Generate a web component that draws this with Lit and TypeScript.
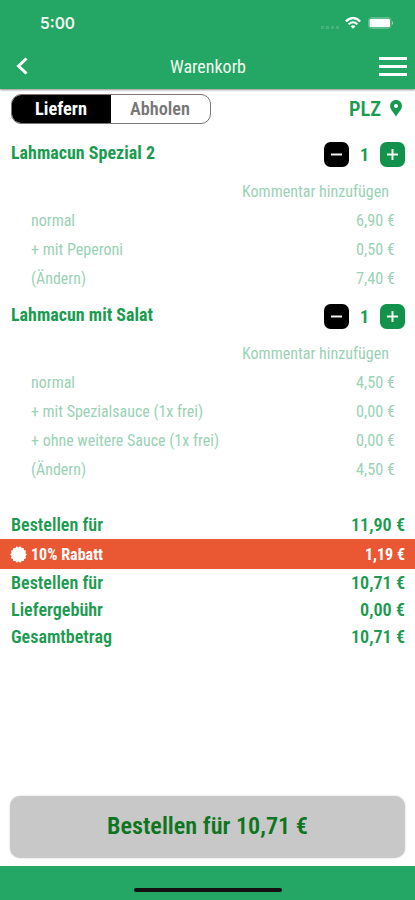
import { LitElement, html, css } from "lit";
import { customElement, property, query } from "lit/decorators.js";

/** A line of text condensed to a given width. */
@customElement("cond-text")
class CondText extends LitElement {
  static styles = css`
    :host { display: block; flex: none; white-space: nowrap; }
    .t { display: inline-block; transform-origin: 0 50%; }
  `;
  @property() text = "";
  @property({ type: Number }) w = 0;
  @query(".t") el!: HTMLElement;

  updated() {
    this.style.width = this.w + "px";
    this.el.style.transform = "none";
    const natural = this.el.getBoundingClientRect().width;
    if (natural) this.el.style.transform = `scaleX(${this.w / natural})`;
  }
  render() {
    return html`<span class="t">${this.text}</span>`;
  }
}

type Line = [string, number, string, number];
interface Item { name: string; w: number; lines: Line[] }

const items: Item[] = [
  {
    name: "Lahmacun Spezial 2", w: 144,
    lines: [
      ["normal", 44, "6,90 €", 39],
      ["+ mit Peperoni", 92, "0,50 €", 39],
      ["(Ändern)", 55, "7,40 €", 39],
    ],
  },
  {
    name: "Lahmacun mit Salat", w: 142,
    lines: [
      ["normal", 44, "4,50 €", 39],
      ["+ mit Spezialsauce (1x frei)", 172, "0,00 €", 39],
      ["+ ohne weitere Sauce (1x frei)", 188, "0,00 €", 39],
      ["(Ändern)", 55, "4,50 €", 39],
    ],
  },
];

const burst = Array.from({ length: 28 }, (_, i) => {
  const a = (i * Math.PI) / 14;
  const r = i % 2 ? 7.1 : 8.4;
  return `${(8.5 + r * Math.cos(a)).toFixed(2)},${(8.5 + r * Math.sin(a)).toFixed(2)}`;
}).join(" ");

@customElement("app-root")
class AppRoot extends LitElement {
  static styles = css`
    :host {
      display: flex; flex-direction: column; height: 900px; width: 415px;
      background: #fff; overflow: hidden; box-sizing: border-box;
      font-family: Roboto, "Liberation Sans", sans-serif; font-stretch: 75%;
      font-size: 18px; color: #1b9b50;
    }
    svg { display: block; flex: none; }
    header {
      height: 89px; flex: none; background: #24a665; color: #f2fbf0;
      box-shadow: 0 1px 2px rgba(0, 0, 0, .45);
    }
    .status { display: flex; height: 45px; align-items: center; padding: 1px 21px 0 40px; box-sizing: border-box; }
    .clock { font: 600 16px Inter, sans-serif; margin-right: auto; }
    .dots { display: flex; gap: 2px; margin: 8px 6px 0 0; }
    .dots i { width: 3px; height: 3px; background: #45b27a; }
    .wifi { margin-right: 7px; }
    .nav { display: grid; grid-template-columns: 1fr auto 1fr; align-items: center; height: 42px; padding: 0 8px 0 16px; }
    .title { margin-right: 8px; }
    .menu { display: flex; flex-direction: column; gap: 5px; width: 28px; justify-self: end; }
    .menu i { height: 3px; background: #fff; }
    .modes { display: flex; justify-content: space-between; align-items: center; height: 30px; margin: 5px 13px 0 11px; flex: none; }
    .seg { display: flex; width: 200px; height: 30px; box-sizing: border-box; border: 1px solid #777; border-radius: 10px; overflow: hidden; font-weight: 700; }
    .seg div { flex: 1; display: flex; align-items: center; justify-content: center; color: #777; padding: 0 2px 1px 0; }
    .seg .on { background: #000; color: #fff; }
    .seg div:last-child { font-weight: 600; }
    .plz { display: flex; align-items: center; gap: 9px; font-weight: 600; font-size: 20px; }
    .plz svg { margin-bottom: 2px; }
    .items { display: flex; flex-direction: column; gap: 6px; margin-top: 13px; flex: none; }
    .head { display: flex; align-items: center; justify-content: space-between; height: 34px; padding: 0 10px 0 11px; font-weight: 700; }
    .head > cond-text { margin-bottom: 4px; }
    .qty { display: flex; align-items: center; gap: 11px; font-size: 19px; }
    .comment { display: flex; justify-content: flex-end; align-items: center; height: 30px; margin-top: 5px; padding-right: 26px; }
    .light { color: #99d2b5; font-size: 16.5px; }
    .line { display: flex; justify-content: space-between; align-items: center; height: 29px; padding: 0 20px 1px 31px; box-sizing: border-box; }
    .totals { margin-top: 26px; flex: none; font-weight: 600; }
    .sum { display: flex; align-items: center; justify-content: space-between; height: 27px; padding: 0 10px 0 11px; }
    .sum:first-child { height: 28px; padding-bottom: 1px; }
    .sum.sale { height: 30px; background: #ea5733; color: #fff; font-size: 16.5px; font-weight: 700; }
    .badge { display: flex; align-items: center; gap: 4px; margin-left: -1px; }
    .order {
      display: flex; align-items: center; justify-content: center; height: 62px; flex: none; box-sizing: border-box;
      margin: auto 10px 8px; padding-bottom: 2px; border-radius: 10px; background: #c7c8c7; color: #0d7520;
      box-shadow: 0 0 2px #ccc; font-size: 24px; font-weight: 600;
    }
    footer { height: 34px; flex: none; background: #24a665; display: flex; justify-content: center; align-items: flex-end; }
    .home { width: 148px; height: 4px; border-radius: 2px; background: #141014; margin-bottom: 8px; }
  `;

  private stepper(plus: boolean) {
    return html`<svg width="25" height="25" viewBox="0 0 25 25">
      <rect width="25" height="25" rx="6.5" fill=${plus ? "#12924c" : "#000"} />
      <path d=${plus ? "M7 12.5H18M12.5 7V18" : "M7 12.5H18"} stroke="#f0f8ec" stroke-width="2" />
    </svg>`;
  }

  private sum(a: string, aw: number, b: string, bw: number) {
    return html`<div class="sum"><cond-text text=${a} w=${aw}></cond-text><cond-text text=${b} w=${bw}></cond-text></div>`;
  }

  render() {
    return html`
      <header>
        <div class="status">
          <cond-text class="clock" text="5:00" w="35"></cond-text>
          <div class="dots"><i></i><i></i><i></i><i></i></div>
          <svg class="wifi" width="16" height="12" viewBox="0 0 16 12" fill="none" stroke="#fff" stroke-width="2.3">
            <path d="M.9 4.5C5-.2 11-.2 15.1 4.5" />
            <path d="M3.6 7.4C6.2 4.6 9.8 4.6 12.4 7.4" stroke-width="2" />
            <path d="M8 11.8L5.5 9.2Q8 7.2 10.5 9.2Z" fill="#fff" stroke="none" />
          </svg>
          <svg width="26" height="12" viewBox="0 0 26 12">
            <rect x=".5" y=".5" width="22.5" height="11" rx="3" fill="none" stroke="#62bd8e" />
            <rect x="1.5" y="1.8" width="20.5" height="8.4" rx="1.5" fill="#fff" />
            <path d="M24 4Q26 6 24 8Z" fill="#a5dabd" />
          </svg>
        </div>
        <div class="nav">
          <svg width="13" height="18" viewBox="0 0 13 18"><path d="M10.5 1.5L2.5 9L10.5 16.5" fill="none" stroke="#fff" stroke-width="3" /></svg>
          <cond-text class="title" text="Warenkorb" w="76"></cond-text>
          <div class="menu"><i></i><i></i><i></i></div>
        </div>
      </header>
      <div class="modes">
        <div class="seg">
          <div class="on"><cond-text text="Liefern" w="52"></cond-text></div>
          <div><cond-text text="Abholen" w="60"></cond-text></div>
        </div>
        <div class="plz">
          <cond-text text="PLZ" w="32"></cond-text>
          <svg width="12" height="17" viewBox="0 0 12 17"><path fill-rule="evenodd" fill="#169a4e" d="M6 .1C2.6 .1 .1 2.7 .1 5.9C.1 9.7 4 12.5 6 16.8C8 12.5 11.9 9.7 11.9 5.9C11.9 2.7 9.4 .1 6 .1ZM6 3.9A2.1 2.1 0 1 1 6 8.1A2.1 2.1 0 1 1 6 3.9Z" /></svg>
        </div>
      </div>
      <div class="items">
        ${items.map((it) => html`<section>
          <div class="head">
            <cond-text text=${it.name} w=${it.w}></cond-text>
            <div class="qty">${this.stepper(false)}<cond-text text="1" w="9"></cond-text>${this.stepper(true)}</div>
          </div>
          <div class="comment light"><cond-text text="Kommentar hinzufügen" w="147"></cond-text></div>
          ${it.lines.map(([a, aw, b, bw]) => html`<div class="line light">
            <cond-text text=${a} w=${aw}></cond-text><cond-text text=${b} w=${bw}></cond-text>
          </div>`)}
        </section>`)}
      </div>
      <div class="totals">
        ${this.sum("Bestellen für", 92, "11,90 €", 54)}
        <div class="sum sale">
          <div class="badge">
            <svg width="17" height="17" viewBox="0 0 17 17"><polygon points=${burst} fill="#fff" /></svg>
            <cond-text text="10% Rabatt" w="72"></cond-text>
          </div>
          <cond-text text="1,19 €" w="40"></cond-text>
        </div>
        ${this.sum("Bestellen für", 92, "10,71 €", 54)}
        ${this.sum("Liefergebühr", 92, "0,00 €", 45)}
        ${this.sum("Gesamtbetrag", 101, "10,71 €", 54)}
      </div>
      <div class="order"><cond-text text="Bestellen für 10,71 €" w="201"></cond-text></div>
      <footer><div class="home"></div></footer>
    `;
  }
}
